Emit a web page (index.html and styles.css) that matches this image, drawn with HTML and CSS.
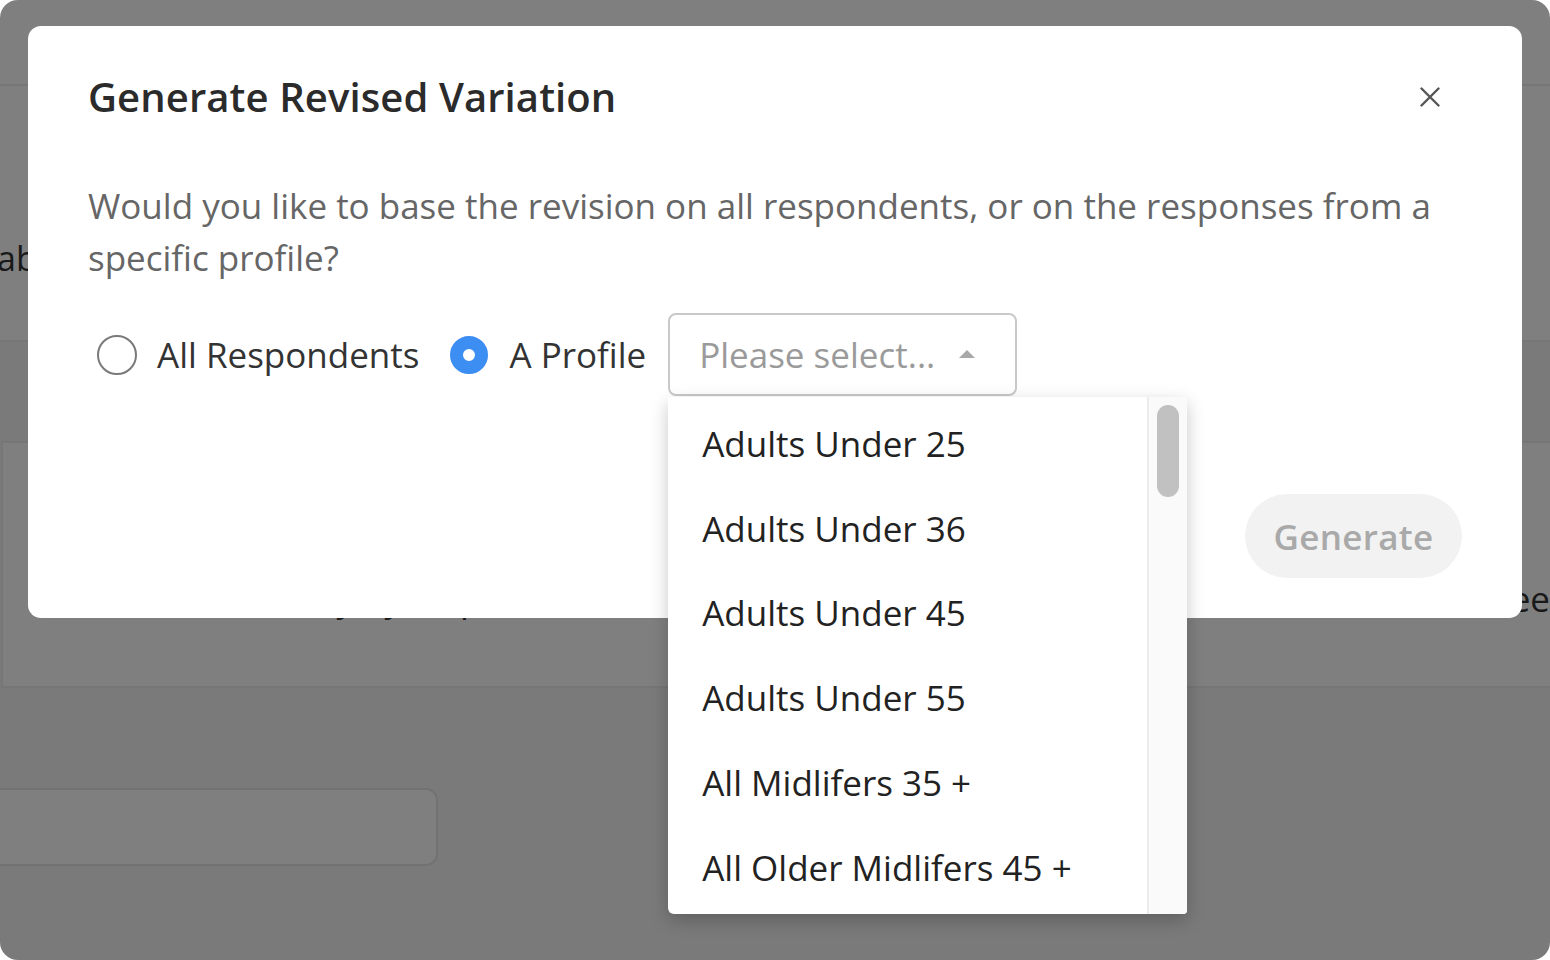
FILE: index.html
```html
<!DOCTYPE html>
<html lang="en">
<head>
<meta charset="utf-8">
<title>Generate Revised Variation</title>
<link rel="stylesheet" href="styles.css">
</head>
<body>
<div class="screen">
  <div class="page">
    <header class="app-header"></header>
    <section class="intro">
      <p class="intro-text"><span>ab</span></p>
    </section>
    <div class="band"></div>
    <section class="card">
      <p class="card-text"><span class="left">Try by step</span><span class="right">ee</span></p>
    </section>
    <div class="lower">
      <div class="fake-input"></div>
    </div>
  </div>

  <div class="overlay"></div>

  <div class="modal" role="dialog">
    <div class="modal-head">
      <h2 class="modal-title">Generate Revised Variation</h2>
      <button class="close-btn" aria-label="Close">
        <svg width="20" height="20" viewBox="0 0 20 20"><path d="M1.5 1.5 L18.5 18.5 M18.5 1.5 L1.5 18.5" stroke="#555" stroke-width="2.4" stroke-linecap="round" fill="none"/></svg>
      </button>
    </div>
    <p class="modal-text">Would you like to base the revision on all respondents, or on the responses from a specific profile?</p>
    <div class="choice-row">
      <label class="radio"><span class="radio-dot"></span><span class="radio-label">All Respondents</span></label>
      <label class="radio checked"><span class="radio-dot"></span><span class="radio-label">A Profile</span></label>
      <div class="select">
        <span class="placeholder">Please select...</span>
        <span class="caret"></span>
        <div class="dropdown">
          <ul class="options">
            <li>Adults Under 25</li>
            <li>Adults Under 36</li>
            <li>Adults Under 45</li>
            <li>Adults Under 55</li>
            <li>All Midlifers 35 +</li>
            <li>All Older Midlifers 45 +</li>
          </ul>
          <div class="scrollbar"><div class="thumb"></div></div>
        </div>
      </div>
    </div>
    <div class="modal-foot">
      <button class="generate-btn">Generate</button>
    </div>
  </div>
</div>
</body>
</html>
```

FILE: styles.css
```css
* { box-sizing: border-box; }

html, body {
  margin: 0;
  padding: 0;
  background: #ffffff;
  font-family: "Open Sans", "Noto Sans", sans-serif;
}

.screen {
  position: relative;
  width: 1550px;
  height: 960px;
  border-radius: 18px;
  overflow: hidden;
  background: #f4f4f4;
}

.page {
  display: flex;
  flex-direction: column;
  height: 100%;
}

.app-header {
  height: 86px;
  background: #ffffff;
  border-bottom: 2px solid #ececec;
  flex: none;
}

.intro {
  height: 256px;
  background: #ffffff;
  border-bottom: 2px solid #ececec;
  flex: none;
  display: flex;
  align-items: flex-start;
}

.intro-text {
  margin: 146px 0 0 -3px;
  font-size: 34px;
  line-height: 52px;
  color: #333;
}

.band {
  height: 99px;
  flex: none;
}

.card {
  height: 247px;
  flex: none;
  margin-left: 1px;
  background: #ffffff;
  border: 2px solid #ececec;
  border-right: none;
  display: flex;
  align-items: flex-start;
}

.card-text {
  margin: 130px 0 0 0;
  width: 100%;
  display: flex;
  justify-content: space-between;
  font-size: 35px;
  line-height: 52px;
  color: #333;
}

.card-text .left { padding-left: 300px; }
.card-text .right { margin-right: 0; }

.lower {
  flex: 1;
  padding-top: 100px;
}

.fake-input {
  width: 462px;
  height: 78px;
  margin-left: -24px;
  background: #ffffff;
  border: 2px solid #e4e4e4;
  border-radius: 12px;
}

.overlay {
  position: absolute;
  inset: 0;
  background: rgba(0, 0, 0, 0.5);
}

.modal {
  position: absolute;
  left: 28px;
  top: 26px;
  width: 1494px;
  height: 592px;
  background: #ffffff;
  border-radius: 13px;
  padding: 45px 60px 40px 60px;
  display: flex;
  flex-direction: column;
}

.modal-head {
  display: flex;
  align-items: center;
  justify-content: space-between;
  height: 52px;
}

.modal-title {
  margin: 0;
  font-size: 40px;
  font-weight: 600;
  line-height: 52px;
  color: #2b2b2b;
  letter-spacing: 0.1px;
}

.close-btn {
  border: none;
  background: none;
  padding: 0;
  width: 20px;
  height: 20px;
  margin-right: 22px;
  display: flex;
}

.modal-text {
  margin: 57px 0 0 0;
  font-size: 35px;
  line-height: 52px;
  color: #666666;
}

.choice-row {
  margin-top: 29px;
  height: 83px;
  display: flex;
  align-items: center;
}

.radio {
  display: flex;
  align-items: center;
}

.radio:first-child { margin-left: 9px; }
.radio + .radio { margin-left: 31px; }

.radio-dot {
  width: 40px;
  height: 40px;
  border-radius: 50%;
  border: 2px solid #7a7a7a;
  background: #fff;
  flex: none;
}

.radio.checked .radio-dot {
  width: 38px;
  height: 38px;
  border: 13px solid #3d8ef2;
  background: #ffffff;
}

.radio-label {
  margin-left: 20px;
  font-size: 35px;
  line-height: 52px;
  color: #333333;
}

.radio.checked .radio-label { margin-left: 21px; }

.select {
  position: relative;
  margin-left: 22px;
  width: 349px;
  height: 83px;
  border: 2px solid #c9c9c9;
  border-radius: 8px;
  display: flex;
  align-items: center;
  padding-left: 29px;
}

.placeholder {
  font-size: 35px;
  line-height: 52px;
  color: #9a9a9a;
}

.caret {
  margin-left: 24px;
  width: 0;
  height: 0;
  border-left: 8px solid transparent;
  border-right: 8px solid transparent;
  border-bottom: 8px solid #a8a8a8;
  margin-top: -2px;
}

.dropdown {
  position: absolute;
  left: -2px;
  top: 82px;
  width: 519px;
  height: 517px;
  background: #ffffff;
  border-radius: 0 0 4px 6px;
  box-shadow: 0 6px 18px rgba(0, 0, 0, 0.22);
  display: flex;
  overflow: hidden;
}

.options {
  list-style: none;
  margin: 0;
  padding: 4px 0 0 34px;
  flex: 1;
}

.options li {
  height: 84.8px;
  display: flex;
  align-items: center;
  font-size: 35px;
  color: #222222;
  white-space: nowrap;
}

.scrollbar {
  width: 40px;
  flex: none;
  background: #fafafa;
  border-left: 2px solid #ececec;
  padding: 8px 0 0 8px;
}

.thumb {
  width: 22px;
  height: 92px;
  border-radius: 11px;
  background: #c1c1c1;
}

.modal-foot {
  margin-top: auto;
  display: flex;
  justify-content: flex-end;
}

.generate-btn {
  width: 217px;
  height: 84px;
  border: none;
  border-radius: 42px;
  background: #f2f2f2;
  font-family: "Open Sans", "Noto Sans", sans-serif;
  font-size: 35px;
  font-weight: 600;
  color: #a9a9a9;
  letter-spacing: 0.3px;
}
```
